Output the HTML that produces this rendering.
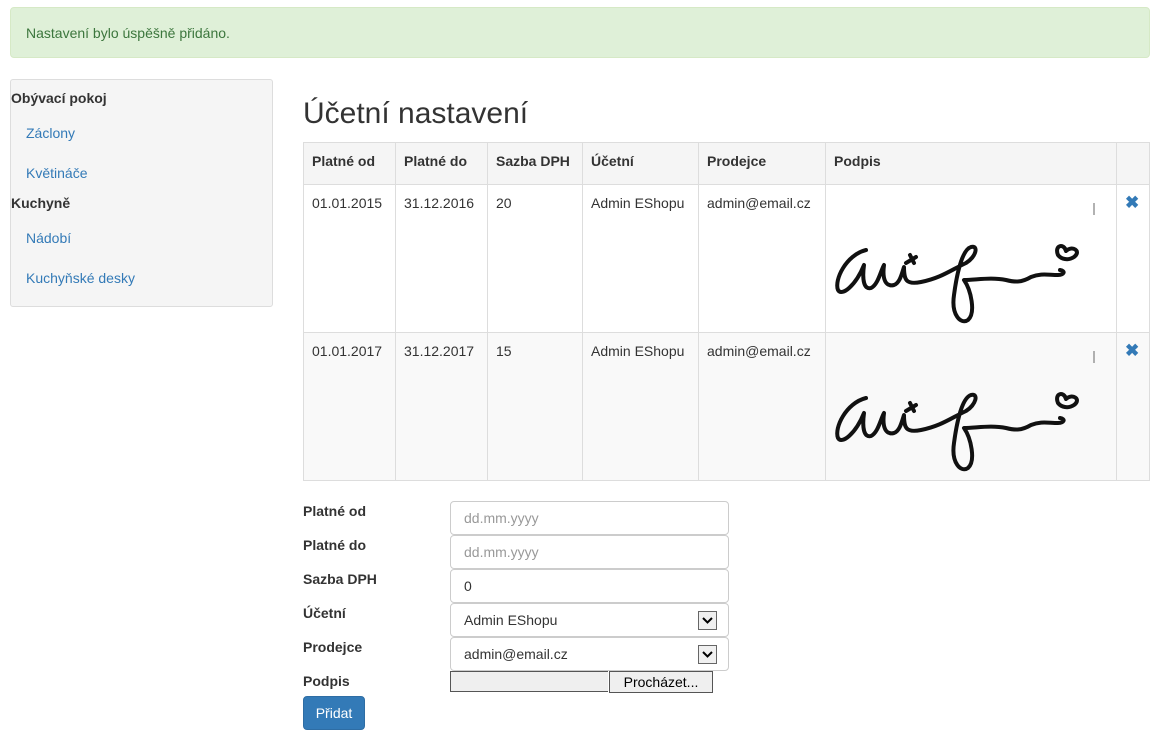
<!DOCTYPE html>
<html><head><meta charset="utf-8"><style>
body{margin:0;font-family:"Liberation Sans",sans-serif;font-size:14px;color:#333;background:#fff;width:1161px;height:744px;overflow:hidden;position:relative}
.abs{position:absolute}
.alert{left:10px;top:7px;width:1140px;height:51px;background:#dff0d8;border:1px solid #d6e9c6;border-radius:4px;color:#3c763d;line-height:50px;box-sizing:border-box;padding-left:15px}
.side{left:10px;top:79px;width:263px;height:228px;background:#f5f5f5;border:1px solid #ddd;border-radius:3px;box-sizing:border-box}
.side b{position:absolute;left:0;font-weight:bold}
.side a{position:absolute;left:15px;color:#337ab7;text-decoration:none}
h1{position:absolute;left:303px;top:96px;margin:0;font-weight:normal;font-size:30px;line-height:36px}
table{position:absolute;left:303px;top:142px;border-collapse:collapse;width:847px}
td,th{border:1px solid #ddd;padding:8px;vertical-align:top;text-align:left;line-height:20px}
th{height:25px;background:#f5f5f5;font-weight:bold}
tr.r1 td{height:131px;background:#fff}
tr.r2 td{height:131px;background:#f9f9f9}
.lbl{left:303px;font-weight:bold}
.inp{left:450px;width:279px;height:34px;border:1px solid #ccc;border-radius:4px;box-sizing:border-box;padding-left:13px;line-height:32px;background:#fff}
.ph{color:#999}
.dd{position:absolute;right:11px;top:7px;width:19px;height:19px;border:1px solid #666;box-sizing:border-box;background:#f0f0f0}
.dd svg{display:block}
.x{color:#337ab7;font-weight:bold;font-size:17px}
</style></head><body>
<div class="abs alert">Nastavení bylo úspěšně přidáno.</div>
<div class="abs side">
<b style="top:10px">Obývací pokoj</b>
<a style="top:45px">Záclony</a>
<a style="top:85px">Květináče</a>
<b style="top:115px">Kuchyně</b>
<a style="top:150px">Nádobí</a>
<a style="top:190px">Kuchyňské desky</a>
</div>
<h1>Účetní nastavení</h1>
<table>
<tr><th style="width:75px">Platné od</th><th style="width:75px">Platné do</th><th style="width:78px">Sazba DPH</th><th style="width:99px">Účetní</th><th style="width:110px">Prodejce</th><th style="width:274px">Podpis</th><th></th></tr>
<tr class="r1"><td>01.01.2015</td><td>31.12.2016</td><td>20</td><td>Admin EShopu</td><td>admin@email.cz</td><td></td><td><span class="x">✖</span></td></tr>
<tr class="r2"><td>01.01.2017</td><td>31.12.2017</td><td>15</td><td>Admin EShopu</td><td>admin@email.cz</td><td></td><td><span class="x">✖</span></td></tr>
</table>
<svg class="abs" style="left:826px;top:185px" width="290" height="296" viewBox="0 0 290 296">
<path d="M268 18 v12" stroke="#666" stroke-width="1"/>
<path d="M268 166 v12" stroke="#666" stroke-width="1"/>
<g id="sig" fill="none" stroke="#111" stroke-width="4" stroke-linecap="round" stroke-linejoin="round">
<path d="M40 65 C20 70 8 95 12 105 C16 112 30 100 38 80 C36 95 38 105 45 103 C52 100 55 85 58 80 C56 95 60 102 68 100 C74 98 76 88 78 82 C78 95 80 100 95 97 C115 93 125 85 140 78 C150 72 153 60 145 62 C135 65 130 95 128 110 C125 130 135 140 142 135 C150 128 145 105 138 95 C150 95 165 92 180 95 C188 97 195 98 205 92 C215 88 222 90 232 90 C238 90 240 86 234 85"/>
<path d="M80 78 l10 -6 M84 70 l4 8"/>
<path d="M232 70 C228 60 238 58 240 66 C246 60 256 66 248 72 C242 76 235 74 232 70"/>
</g>
<use href="#sig" y="148"/>
</svg>
<div class="abs lbl" style="top:503px">Platné od</div>
<div class="abs lbl" style="top:537px">Platné do</div>
<div class="abs lbl" style="top:571px">Sazba DPH</div>
<div class="abs lbl" style="top:605px">Účetní</div>
<div class="abs lbl" style="top:639px">Prodejce</div>
<div class="abs lbl" style="top:673px">Podpis</div>
<div class="abs inp ph" style="top:501px">dd.mm.yyyy</div>
<div class="abs inp ph" style="top:535px">dd.mm.yyyy</div>
<div class="abs inp" style="top:569px">0</div>
<div class="abs inp" style="top:603px">Admin EShopu<div class="dd"><svg width="17" height="17"><path d="M4 6 l4.5 4.5 L13 6" stroke="#000" stroke-width="2" fill="none"/></svg></div></div>
<div class="abs inp" style="top:637px">admin@email.cz<div class="dd"><svg width="17" height="17"><path d="M4 6 l4.5 4.5 L13 6" stroke="#000" stroke-width="2" fill="none"/></svg></div></div>
<div class="abs" style="left:450px;top:671px;width:158px;height:21px;background:#efefef;border:1px solid #555;border-right:none;box-sizing:border-box"></div>
<div class="abs" style="left:609px;top:671px;width:104px;height:22px;background:#efefef;border:1px solid #555;box-sizing:border-box;text-align:center;line-height:20px;color:#000">Procházet...</div>
<div class="abs" style="left:303px;top:696px;width:62px;height:34px;background:#337ab7;border:1px solid #2e6da4;border-radius:4px;box-sizing:border-box;color:#fff;text-align:center;line-height:32px">Přidat</div>
</body></html>
